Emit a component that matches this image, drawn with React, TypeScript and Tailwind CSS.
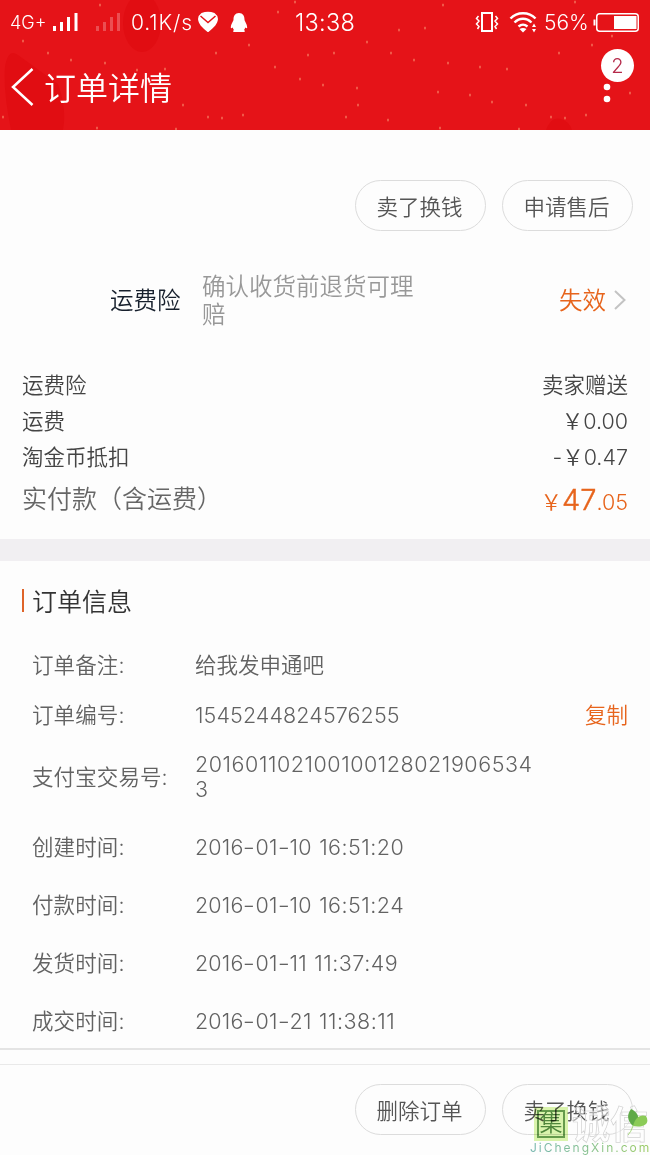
import { Fragment, type ReactNode } from "react";

const prices = [
  { label: "运费险", value: "卖家赠送" },
  { label: "运费", value: "￥0.00" },
  { label: "淘金币抵扣", value: "-￥0.47" },
];

const times = [
  { label: "创建时间:", date: "2016-01-10", time: "16:51:20" },
  { label: "付款时间:", date: "2016-01-10", time: "16:51:24" },
  { label: "发货时间:", date: "2016-01-11", time: "11:37:49" },
  { label: "成交时间:", date: "2016-01-21", time: "11:38:11" },
];

const snow = [
  [23, 41], [48, 53], [71, 60], [105, 63], [216, 53], [249, 45], [275, 67], [308, 55],
  [137, 70], [165, 69], [300, 79], [3, 117], [183, 105], [208, 117], [222, 118], [243, 115],
  [97, 128], [176, 129], [100, 5], [295, 2], [278, 12], [323, 85], [334, 53], [367, 42],
  [391, 53], [414, 60], [448, 63], [480, 67], [507, 69], [357, 88], [438, 92], [470, 95],
  [492, 102], [358, 105], [526, 105], [346, 117], [388, 120], [440, 128], [519, 129], [551, 117],
  [565, 118], [586, 115], [399, 30], [425, 28], [443, 5], [559, 53], [592, 45], [612, 36],
  [630, 93], [575, 2],
];

const PillButton = ({ children }: { children: ReactNode }) => (
  <button className="w-[131px] h-[51px] pt-1 pr-0.5 rounded-full border border-[#dcdcdc] text-[21.5px] leading-none text-[#555]">
    {children}
  </button>
);

const StatusBar = () => (
  <div className="relative flex items-center h-11 text-white text-[21px]">
    <span className="ml-2.5 w-[42px] text-[18px] whitespace-nowrap">4G+</span>
    <svg className="shrink-0" width="72" height="20" viewBox="0 0 72 20" fill="currentColor">
      <path d="M1 14h3v5H1zM8 10h3v9H8zM15 5h3v14h-3zM22.500 1h3v18h-3z" />
      <path opacity=".25" d="M44 14h3v5h-3zM51 10h3v9h-3zM58 5h3v14h-3zM65 1h3v18h-3z" />
    </svg>
    <span className="ml-[7px] mt-0.5 w-[67px] tracking-[0.9px] whitespace-nowrap">0.1K/s</span>
    <svg className="shrink-0" width="20" height="22" viewBox="0 0 20 22">
      <path d="M3.500 2Q10-.5 16.500 2 19.500 4 20 8C19.500 13 16 16.500 11 20.500Q10 21.500 9 20.500C4 16.500.5 13 0 8Q.5 4 3.500 2z" fill="currentColor" />
      <path d="m2.500 5 7.500 6.500L17.500 5" fill="none" stroke="#e51318" strokeWidth="1.500" />
    </svg>
    <svg className="ml-3 shrink-0" width="18" height="21" viewBox="0 0 18 21" fill="currentColor">
      <path d="M9 1c4 0 5.500 3 5.500 6.500 0 2 2.500 4 2.700 8 0 1-.8 1-2 0-.2 1-.7 2-1.200 2.400 1.600.8 1.200 2.100-1 2.100H5c-2.200 0-2.600-1.300-1-2.100-.5-.4-1-1.400-1.200-2.400-1.200 1-2 1-2 0 .2-4 2.700-6 2.700-8C3.500 4 5 1 9 1z" />
    </svg>
    <span className="ml-[47px] mt-0.5 text-[23.5px] tracking-[0.3px]">13:38</span>
    <div className="ml-auto mr-[11px] flex items-center">
      <svg width="24" height="20" viewBox="0 0 24 20" fill="none" stroke="currentColor">
        <rect x="7" y="1" width="10" height="18" strokeWidth="2" />
        <path d="m3.500 4-2 2.500L4 9l-2.500 3L4 14.500 2.500 17M20.500 4l2 2.500L20 9l2.500 3-2.500 2.500 1.500 2.500" strokeWidth="1.500" />
      </svg>
      <svg className="ml-[10px]" width="30" height="21" viewBox="0 0 30 21" fill="none" stroke="currentColor" strokeWidth="2.400">
        <path d="M1.500 6.500C8-.5 20-.5 26.500 6.500M5.500 10.500c5-5 12-5 17 0M9.500 14.500c3-2.500 6-2.500 9 0" />
        <path d="M10.500 17q3.500-2 7 0L14 20.500z" fill="currentColor" stroke="none" />
        <path d="m23 15 2-3.500 2 3.500zM23 17h4l-2 3.500z" fill="currentColor" stroke="none" />
      </svg>
      <span className="ml-[5px] mt-0.5 w-[43px] whitespace-nowrap">56%</span>
      <svg className="ml-1.5" width="46" height="19" viewBox="0 0 46 19">
        <path d="M1.500 6.500v6" stroke="currentColor" strokeWidth="2" />
        <rect x="3.750" y=".75" width="41.500" height="17.500" rx="3" fill="none" stroke="currentColor" strokeWidth="1.500" />
        <path d="M21 3h22.500v13H21z" fill="currentColor" />
      </svg>
    </div>
  </div>
);

const Header = () => (
  <header className="relative h-[130px] bg-[#e51318] overflow-hidden">
    <svg className="absolute inset-0" width="650" height="130">
      <g fill="#e10d12">
        <ellipse cx="142" cy="23" rx="19" ry="29" />
        <path d="M5 67Q8 48 18 55L58 84Q67 109 63 130H11Q3 90 5 67zM546 130q5-14 15-11 9 3 11 11z" />
      </g>
      {snow.map(([x, y], i) => (
        <ellipse key={i} cx={x} cy={y} rx="0.8" ry="1.6" fill="#f4735c" />
      ))}
    </svg>
    <StatusBar />
    <div className="relative flex items-center h-[86px] text-white">
      <svg className="ml-[11px]" width="24" height="40" viewBox="0 0 24 40" fill="none" stroke="currentColor" strokeWidth="2.500">
        <path d="M21.500 2 2 20l19.500 18" />
      </svg>
      <h1 className="ml-[9px] pt-1 text-[32px] leading-none font-[350]">订单详情</h1>
      <svg className="ml-auto mr-[39px] mt-3" width="8" height="30" viewBox="0 0 8 30" fill="currentColor">
        <circle cx="4" cy="9" r="3.300" />
        <circle cx="4" cy="21" r="3.300" />
      </svg>
      <span className="absolute top-[5px] right-4 flex items-center justify-center size-[33px] rounded-full bg-white text-[20px] text-[#b52a4a]">
        2
      </span>
    </div>
  </header>
);

const InfoRow = ({ label, children, className }: { label: string; children: ReactNode; className: string }) => (
  <div className={`flex items-center pl-8 pr-[22px] ${className}`}>
    <span className="w-[163px] shrink-0 tracking-[0.1px]">{label}</span>
    {children}
  </div>
);

// hyphens are drawn wider than the font has them
const DateText = ({ date, time }: { date: string; time: string }) => (
  <span className="whitespace-nowrap tracking-[0.15px]">
    {date.split("-").map((part, i) => (
      <Fragment key={i}>
        {i > 0 && <span className="inline-block w-3 scale-x-[1.25] text-center">-</span>}
        {part}
      </Fragment>
    ))}
    <span className="ml-px tracking-[0.5px]"> {time}</span>
  </span>
);

const Watermark = () => (
  <div className="absolute left-[530px] bottom-0 w-[120px] h-[49px]">
    <div className="flex items-center h-[35px]">
      <div className="ml-1 flex size-[34px] items-center justify-center bg-[#c3ee78]/60 mix-blend-multiply">
        <span className="flex size-[28px] items-center justify-center border-2 border-[#669c4c] text-[23px] leading-none text-[#4f873c]">
          集
        </span>
      </div>
      <span className="ml-1 whitespace-nowrap text-[38px] leading-[34px] font-bold text-white/50 [-webkit-text-stroke:0.7px_#d2d2d2]">
        诚信
      </span>
    </div>
    <svg className="absolute right-[2px] top-[2px]" width="20" height="28" viewBox="0 0 20 28">
      <path d="M3 1C-2 8 0 13 5 18 13 11 11 5 3 1z" fill="#5faa48" />
      <path d="M5 18C7 10 12 6 18 8c4 7-1 12-13 10z" fill="#8bcb57" />
      <path d="M5 18Q3 24 0 27" fill="none" stroke="#a7d87d" />
    </svg>
    <div className="text-[12px] leading-[14px] tracking-[2px] font-normal whitespace-nowrap bg-linear-to-r from-[#73b5ad] to-[#9acb60] bg-clip-text text-transparent">
      JiChengXin.com
    </div>
  </div>
);

const App = () => {
  return (
    <div className="relative w-[650px] h-[1155px] overflow-hidden bg-[#fdfdfd] font-[350] font-[Inter,'Noto_Sans_CJK_SC',sans-serif]">
      <Header />
      <section className="h-[409px] pt-[50px] text-[21.5px] text-[#444]">
        <div className="flex justify-end gap-4 pr-[17px]">
          <PillButton>卖了换钱</PillButton>
          <PillButton>申请售后</PillButton>
        </div>
        <div className="mt-[42px] flex h-14 items-center pl-[110px] pr-6 text-[23.5px]">
          <span className="w-[92px] text-[#17202d]">运费险</span>
          <p className="w-[220px] leading-7 text-[#989898]">确认收货前退货可理赔</p>
          <span className="ml-auto text-[#e7641c]">失效</span>
          <svg className="ml-2 -mt-0.5" width="12" height="20" viewBox="0 0 12 20" fill="none" stroke="#c3c3c3" strokeWidth="2">
            <path d="m1 1 9.500 9L1 19" />
          </svg>
        </div>
        <div className="mt-[38px] px-[22px]">
          {prices.map((p) => (
            <div key={p.label} className="flex h-9 items-center justify-between">
              <span>{p.label}</span>
              <span>{p.value}</span>
            </div>
          ))}
          <div className="flex h-[50px] items-center justify-between">
            <span className="text-[25px] text-[#666]">实付款（含运费）</span>
            <span className="text-[#e7641c]">
              ￥<span className="text-[29px] [-webkit-text-stroke:0.4px_#e7641c]">47</span>.05
            </span>
          </div>
        </div>
      </section>
      <div className="h-[22px] bg-[#f1eff2]"></div>
      <section className="text-[21.5px] text-[#626262]">
        <div className="flex h-[79px] items-center pl-[22px]">
          <span className="w-[2px] h-[23px] bg-[#df6429]"></span>
          <h2 className="ml-2 pt-1 text-[25px] text-[#333]">订单信息</h2>
        </div>
        <InfoRow label="订单备注:" className="h-[50px]">给我发申通吧</InfoRow>
        <InfoRow label="订单编号:" className="h-[50px]">
          <span className="tracking-[0.1px]">1545244824576255</span>
          <button className="ml-auto text-[#e7641c]">复制</button>
        </InfoRow>
        <InfoRow label="支付宝交易号:" className="h-[74px] mb-1">
          <span className="w-[344px] leading-[25px] tracking-[0.55px] break-all">2016011021001001280219065343</span>
        </InfoRow>
        {times.map((t) => (
          <InfoRow key={t.label} label={t.label} className="h-[58px]">
            <DateText date={t.date} time={t.time} />
          </InfoRow>
        ))}
      </section>
      <div className="-mt-0.5 h-[17px] border-t-2 border-b border-t-[#e4e4e4] border-b-[#e9e9e9]"></div>
      <footer className="flex justify-end gap-4 pt-[19px] pr-[17px]">
        <PillButton>删除订单</PillButton>
        <PillButton>卖了换钱</PillButton>
      </footer>
      <Watermark />
    </div>
  );
};

export default App;
